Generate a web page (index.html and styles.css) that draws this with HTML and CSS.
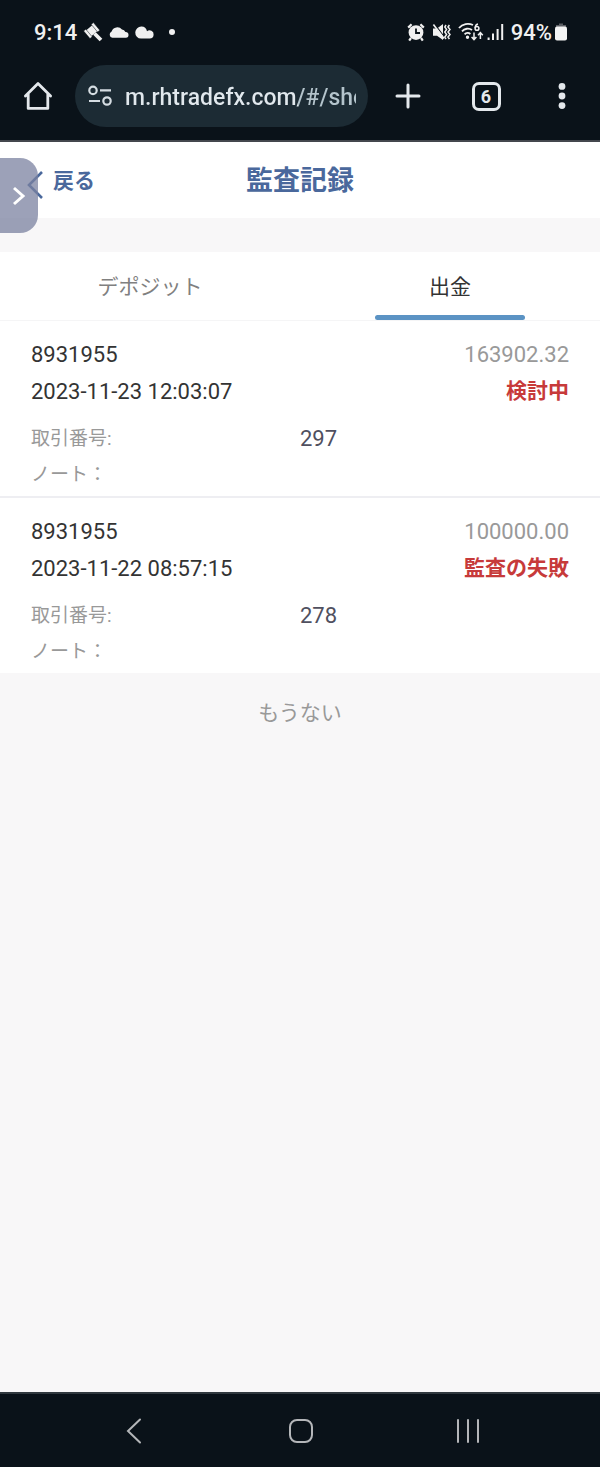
FILE: index.html
```html
<!DOCTYPE html>
<html lang="ja">
<head>
    <meta charset="UTF-8">
    <meta name="viewport" content="width=device-width, initial-scale=1.0">
    <title>監査記録</title>
    <link rel="stylesheet" href="styles.css">
</head>
<body>
    <!-- Browser chrome -->
    <div class="chrome">
        <div class="status-bar">
            <div class="status-left">
                <span class="clock">9:14</span>
                <svg width="20" height="20" viewBox="0 0 20 20" fill="#f0f0f0">
                    <path d="M3 8.5L9.5 3L14.5 9L8 14.5Z"/>
                    <path d="M8.2 2.4L10.4 0.6L16.8 8.2L14.6 10ZM0.6 9L2.8 7.2L9.2 14.8L7 16.6Z" stroke="#0a1219" stroke-width="0.5"/>
                    <path d="M11.5 11.5L18 18" stroke="#f0f0f0" stroke-width="3.8"/>
                </svg>
                <svg width="20" height="20" viewBox="0 0 20 20" fill="#f0f0f0">
                    <path d="M3.4 15.8A3.4 3.4 0 0 1 2.6 9.4A6 6 0 0 1 13 7.6A4.2 4.2 0 0 1 16.4 10A2.9 2.9 0 0 1 16.8 15.8Z"/>
                </svg>
                <svg width="20" height="20" viewBox="0 0 20 20" fill="#f0f0f0">
                    <path d="M6.5 4.6A5.8 5.8 0 0 1 12 9.2A4 4 0 0 1 18.6 12.6A4 4 0 0 1 14.6 16.6H6A6 6 0 0 1 6.5 4.6Z"/>
                </svg>
                <span class="dot"></span>
            </div>
            <div class="status-right">
                <svg width="18" height="20" viewBox="0 0 18 20" fill="#f0f0f0">
                    <circle cx="9" cy="10.6" r="7.4"/>
                    <path d="M1.2 5.6L4.6 2.2M16.8 5.6L13.4 2.2M4 16L2.2 18.6M14 16L15.8 18.6" stroke="#f0f0f0" stroke-width="2.2"/>
                    <path d="M9 6.4V11H13" fill="none" stroke="#0a1219" stroke-width="1.8"/>
                </svg>
                <svg width="19" height="20" viewBox="0 0 19 20">
                    <path d="M1 6.6H5L11 2V18L5 13.8H1Z" fill="#f0f0f0"/>
                    <path d="M2.8 2.4L12.4 15" stroke="#0a1219" stroke-width="1.2"/>
                    <path d="M1.4 2.6L12 16.6" stroke="#f0f0f0" stroke-width="1.6"/>
                    <path d="M14 3L12.8 5L14.6 7.5L12.8 10L14.6 12.5L12.8 15L14 17M17.4 3L16 5L18 7.5L16 10L18 12.5L16 15L17.4 17" fill="none" stroke="#f0f0f0" stroke-width="1.5"/>
                </svg>
                <svg width="26" height="20" viewBox="0 0 26 20" fill="none" stroke="#f0f0f0" stroke-width="1.8">
                    <path d="M1 6C4.5 1.6 10.5 .8 15 3M4 9.4C6.4 6.4 11 5.8 14 8M6.6 12.4C8.2 10.6 10.8 10.6 12.4 12"/>
                    <circle cx="9.5" cy="15.2" r="0.8" fill="#f0f0f0"/>
                    <path d="M20 2C18 2.4 17.2 4 17.2 6" stroke-width="1.5"/>
                    <circle cx="19" cy="6.4" r="1.9" stroke-width="1.5"/>
                    <path d="M16 10.4V17.4M13.6 15L16 17.6L18.4 15M22.4 17V11M20 13.2L22.4 10.6L24.8 13.2" stroke-width="1.5"/>
                </svg>
                <svg class="signal" width="17" height="20" viewBox="0 0 17 20" fill="none" stroke="#f0f0f0" stroke-width="2">
                    <path d="M1.6 15.5V18M6 11.5V18M10.6 7V18"/>
                    <path d="M15.2 2V18"/>
                </svg>
                <span class="battery-text">94%</span>
                <svg class="battery" width="12" height="20" viewBox="0 0 12 20">
                    <path d="M4 1.4H8V3H11V7H1V3H4Z" fill="#5a5d63"/>
                    <rect x="0" y="4.6" width="12" height="14" rx="2" fill="#f4f4f4"/>
                </svg>
            </div>
        </div>

        <div class="toolbar">
            <button class="tool home" aria-label="Home">
                <svg width="30" height="30" viewBox="0 0 30 30" fill="none" stroke="#e4e8ec" stroke-width="2.8" stroke-linecap="round" stroke-linejoin="round">
                    <path d="M2.4 15L15 2.6L27.6 15M5.2 13V27.4H24.8V13"/>
                </svg>
            </button>
            <div class="address">
                <svg width="26" height="22" viewBox="0 0 26 22" fill="none" stroke="#d5dde2" stroke-width="2.2">
                    <circle cx="6" cy="5.4" r="3.7"/>
                    <path d="M13 5.4H24M2 16H13"/>
                    <circle cx="20" cy="16" r="3.7"/>
                </svg>
                <input class="url" type="text" aria-label="URL" value="m.rhtradefx.com/#/she">
            </div>
            <button class="tool plus" aria-label="New tab">
                <svg width="26" height="26" viewBox="0 0 26 26" stroke="#e4e8ec" stroke-width="3" stroke-linecap="round">
                    <path d="M13 2V24M2 13H24"/>
                </svg>
            </button>
            <button class="tool tab-switch" aria-label="Tabs"><span class="tab-count">6</span></button>
            <button class="tool more" aria-label="Menu">
                <svg width="8" height="26" viewBox="0 0 8 26" fill="#e4e8ec">
                    <circle cx="4" cy="3.4" r="3.4"/>
                    <circle cx="4" cy="13" r="3.4"/>
                    <circle cx="4" cy="22.6" r="3.4"/>
                </svg>
            </button>
        </div>
    </div>

    <!-- Page header -->
    <header class="header">
        <a class="back" href="#">
            <svg width="16" height="30" viewBox="0 0 16 30" fill="none" stroke="#4a689c" stroke-width="2.6">
                <path d="M15 2L2 15L15 28"/>
            </svg>
            <span>戻る</span>
        </a>
        <h1 class="title">監査記録</h1>
        <button class="drawer" aria-label="Open">
            <svg width="14" height="20" viewBox="0 0 14 20" fill="none" stroke="#fff" stroke-width="3">
                <path d="M2 2L11 10L2 18"/>
            </svg>
        </button>
    </header>

    <!-- Content -->
    <main class="content">
        <div class="tabs">
            <button class="tab">デポジット</button>
            <button class="tab active">出金</button>
        </div>

        <ul class="record-list">
            <li class="record">
                <div class="row"><span>8931955</span><span class="amount">163902.32</span></div>
                <div class="row"><span>2023-11-23 12:03:07</span><span class="state">検討中</span></div>
                <div class="meta">
                    <div class="meta-row"><span class="label">取引番号:</span><span class="number">297</span></div>
                    <div class="meta-row"><span class="label">ノート：</span></div>
                </div>
            </li>
            <li class="record">
                <div class="row"><span>8931955</span><span class="amount">100000.00</span></div>
                <div class="row"><span>2023-11-22 08:57:15</span><span class="state">監査の失敗</span></div>
                <div class="meta">
                    <div class="meta-row"><span class="label">取引番号:</span><span class="number">278</span></div>
                    <div class="meta-row"><span class="label">ノート：</span></div>
                </div>
            </li>
        </ul>

        <p class="no-more">もうない</p>
    </main>

    <!-- System navigation -->
    <nav class="system-nav">
        <button class="nav-button" aria-label="Back">
            <svg width="26" height="26" viewBox="0 0 26 26"><path d="M19 1.5L7 13L19 24.5"/></svg>
        </button>
        <button class="nav-button" aria-label="Home">
            <svg width="26" height="26" viewBox="0 0 26 26"><rect x="2" y="2" width="22" height="22" rx="7"/></svg>
        </button>
        <button class="nav-button" aria-label="Recent apps">
            <svg width="26" height="26" viewBox="0 0 26 26"><path d="M3 2V24M13 2V24M23 2V24"/></svg>
        </button>
    </nav>
</body>
</html>
```

FILE: styles.css
```css
/* Global Styles */
* {
    box-sizing: border-box;
    margin: 0;
    padding: 0;
}

body {
    display: flex;
    flex-direction: column;
    min-height: 100vh;
    font-family: Roboto, "Noto Sans CJK JP", sans-serif;
    font-size: 22px;
    background-color: #f8f7f8;
    color: #333;
}

button {
    border: none;
    background: none;
    font-family: inherit;
    cursor: pointer;
}

svg {
    display: block;
    flex-shrink: 0;
}

/* Browser chrome */
.chrome {
    background-color: #0a1219;
    color: #f0f0f0;
    padding-bottom: 12px;
    border-bottom: 2px solid #44474e;
}

.status-bar {
    display: flex;
    justify-content: space-between;
    align-items: center;
    height: 64px;
    padding: 0 33px 0 34px;
    font-weight: 500;
}

.status-left,
.status-right {
    display: flex;
    align-items: center;
    gap: 7px;
}

.status-left {
    gap: 6px;
}

.dot {
    width: 6px;
    height: 6px;
    margin-left: 8px;
    border-radius: 50%;
    background-color: #f0f0f0;
}

.signal {
    margin-left: -4px;
}

.battery {
    margin-left: -4px;
}

.toolbar {
    display: flex;
    align-items: center;
    height: 64px;
}

.tool {
    display: flex;
    justify-content: center;
    align-items: center;
    width: 76px;
    height: 62px;
}

.home {
    width: 75px;
}

.plus {
    width: 80px;
}

.address {
    display: flex;
    flex: 1;
    align-items: center;
    gap: 12px;
    min-width: 0;
    height: 62px;
    padding: 0 12px;
    border-radius: 31px;
    background-color: #1c2b34;
}

.url {
    flex: 1;
    min-width: 0;
    padding-top: 2px;
    border: none;
    outline: none;
    font-family: inherit;
    font-size: 23px;
    font-weight: 500;
    color: transparent;
    background: linear-gradient(to right, #e1e8ed 173px, #b4c4cc 173px);
    background-clip: text;
    -webkit-background-clip: text;
}

.tab-count {
    width: 29px;
    height: 29px;
    border: 3px solid #e4e8ec;
    border-radius: 7px;
    color: #e4e8ec;
    font-size: 18px;
    font-weight: 700;
    line-height: 23px;
}

/* Page header */
.header {
    display: flex;
    position: relative;
    justify-content: center;
    align-items: center;
    height: 76px;
    padding-bottom: 3px;
    background-color: #fff;
    color: #4a689c;
}

.back {
    display: flex;
    position: absolute;
    left: 27px;
    align-items: center;
    gap: 10px;
    color: #4a689c;
    font-size: 21px;
    font-weight: 700;
    text-decoration: none;
}

.back svg {
    margin-top: 12px;
}

.title {
    font-size: 27px;
}

.drawer {
    display: flex;
    position: absolute;
    left: 0;
    top: 16px;
    justify-content: center;
    align-items: center;
    width: 38px;
    height: 75px;
    border-radius: 0 18px 18px 0;
    background-color: rgba(123, 130, 160, 0.75);
}

/* Tabs */
.content {
    flex: 1;
    padding-top: 34px;
}

.tabs {
    display: flex;
    background-color: #fff;
    border-bottom: 1px solid #f5f5f6;
}

.tab {
    position: relative;
    flex: 1;
    height: 68px;
    padding-bottom: 3px;
    color: #808080;
    font-size: 21px;
}

.tab.active {
    color: #333;
}

.tab.active::after {
    content: "";
    position: absolute;
    left: 25%;
    bottom: 0;
    width: 50%;
    height: 5px;
    border-radius: 3px;
    background-color: #5b93c4;
}

/* Records */
.record-list {
    list-style-type: none;
    background-color: #fff;
}

.record {
    padding: 15px 31px 3px;
}

.record + .record {
    border-top: 2px solid #eeeef2;
}

.row {
    display: flex;
    justify-content: space-between;
    line-height: 37px;
}

.amount {
    color: #999;
}

.state {
    color: #c73a3a;
    font-size: 21px;
    font-weight: 700;
}

.meta {
    margin-top: 11px;
}

.meta-row {
    display: flex;
    height: 36px;
    line-height: 36px;
}

.label {
    width: 50%;
    color: #999;
    font-size: 19px;
}

.number {
    color: #50505f;
}

.no-more {
    padding-top: 22px;
    color: #999;
    font-size: 21px;
    line-height: 36px;
    text-align: center;
}

/* System navigation */
.system-nav {
    display: flex;
    height: 75px;
    padding: 0 48px 0 50px;
    background-color: #0a1219;
    border-top: 2px solid #30383e;
}

.nav-button {
    display: flex;
    flex: 1;
    justify-content: center;
    align-items: center;
}

.nav-button svg {
    fill: none;
    stroke: #b4b6b9;
    stroke-width: 2;
    stroke-linecap: round;
}
```
